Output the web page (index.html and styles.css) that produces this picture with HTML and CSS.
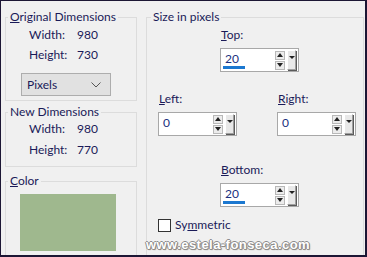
FILE: index.html
```html
<!DOCTYPE html>
<html>

<head>
	<meta charset="utf-8">
	<title>Add Borders</title>
	<link rel="stylesheet" href="styles.css">
</head>

<body>
	<div class="dialog">
		<div class="col-left">
			<fieldset class="group group-orig">
				<legend><u>O</u>riginal Dimensions</legend>
				<div class="dims dims-orig">
					<span>Width:</span><span>980</span>
					<span>Height:</span><span>730</span>
				</div>
				<div class="select">
					<span>Pixels</span>
					<svg width="10" height="6" viewBox="0 0 10 6"><path d="M0.5 0.5 L5 5 L9.5 0.5" fill="none" stroke="#555" stroke-width="1"/></svg>
				</div>
			</fieldset>
			<fieldset class="group group-new">
				<legend>New Dimensions</legend>
				<div class="dims dims-new">
					<span>Width:</span><span>980</span>
					<span>Height:</span><span>770</span>
				</div>
			</fieldset>
			<fieldset class="group group-color">
				<legend><u>C</u>olor</legend>
				<div class="swatch"></div>
			</fieldset>
		</div>

		<fieldset class="group group-size">
			<legend>Size in pixels</legend>
			<div class="row row-top">
				<div class="field">
					<label><u>T</u>op:</label>
					<div class="num">
						<span class="val">20</span>
						<span class="bar"></span>
						<span class="spin"><i class="up"></i><i class="down"></i></span>
						<span class="drop"><i></i></span>
					</div>
				</div>
			</div>
			<div class="row row-mid">
				<div class="field">
					<label><u>L</u>eft:</label>
					<div class="num">
						<span class="val">0</span>
						<span class="spin"><i class="up"></i><i class="down"></i></span>
						<span class="drop"><i></i></span>
					</div>
				</div>
				<div class="field">
					<label><u>R</u>ight:</label>
					<div class="num">
						<span class="val">0</span>
						<span class="spin"><i class="up"></i><i class="down"></i></span>
						<span class="drop"><i></i></span>
					</div>
				</div>
			</div>
			<div class="row row-bottom">
				<div class="field">
					<label><u>B</u>ottom:</label>
					<div class="num">
						<span class="val">20</span>
						<span class="bar"></span>
						<span class="spin"><i class="up"></i><i class="down"></i></span>
						<span class="drop"><i></i></span>
					</div>
				</div>
			</div>
			<div class="check">
				<span class="box"></span>
				<span>Sy<u>m</u>metric</span>
			</div>
		</fieldset>

		<div class="watermark">www.estela-fonseca.com</div>
	</div>
</body>

</html>
```

FILE: styles.css
```css
body {
	margin: 0;
	font-family: Lato, "Noto Sans", sans-serif;
	font-size: 12px;
	line-height: 16px;
	color: #1a1a58;
}

u {
	text-decoration: underline;
	text-underline-offset: 1px;
}

.dialog {
	position: relative;
	box-sizing: border-box;
	width: 367px;
	height: 257px;
	overflow: hidden;
	display: flex;
	align-items: flex-start;
	gap: 9px;
	padding: 8px 0 0 4px;
	background-color: #f0f0f0;
	border-style: solid;
	border-color: #1c1634;
	border-width: 1px 2px 2px 1px;
}

.col-left {
	width: 132px;
	display: flex;
	flex-direction: column;
}

.group {
	margin: 0;
	padding: 0;
	border: 1px solid #dcdcdc;
	min-width: 0;
}

.group legend {
	margin-left: 2px;
	padding: 0 2px;
	line-height: 16px;
}

/* left column groups */
.group-orig {
	padding-bottom: 4px;
}

.dims {
	display: grid;
	grid-template-columns: 48px auto;
	padding-left: 23px;
}

.dims-orig {
	margin-top: 2px;
	row-gap: 4px;
}

.group-new {
	margin-top: 3px;
	padding-bottom: 8px;
}

.dims-new {
	margin-top: 1px;
	row-gap: 5px;
}

.select {
	box-sizing: border-box;
	width: 90px;
	height: 23px;
	margin: 10px 0 0 15px;
	padding: 0 9px 0 5px;
	display: flex;
	align-items: center;
	justify-content: space-between;
	background-color: #e1e1e1;
	border: 1px solid #adadad;
}

.group-color {
	margin-top: 6px;
	height: 100px;
}

.swatch {
	width: 96px;
	height: 57px;
	margin: 5px 0 0 14px;
	background-color: #9fb88e;
}

/* size in pixels */
.group-size {
	width: 216px;
	height: 250px;
}

.group-size legend {
	margin-left: 4px;
}

.row {
	display: flex;
}

.row-top {
	margin-top: 2px;
	padding-left: 73px;
}

.row-mid {
	margin-top: 19px;
	padding-left: 11px;
	gap: 40px;
}

.row-bottom {
	margin-top: 26px;
	padding-left: 73px;
}

.field {
	display: flex;
	flex-direction: column;
	gap: 5px;
}

.field label {
	padding-left: 1px;
}

.num {
	position: relative;
	box-sizing: border-box;
	width: 79px;
	height: 24px;
	display: flex;
	align-items: center;
	padding: 0 2px 0 4px;
	background-color: #fff;
	border: 1px solid #a8a8a8;
	color: #1a2f80;
}

.num .val {
	flex: 1;
	margin-top: -2px;
}

.num .bar {
	position: absolute;
	left: 2px;
	bottom: 2px;
	width: 22px;
	height: 3px;
	background-color: #1c78d0;
}

.spin {
	display: flex;
	flex-direction: column;
	gap: 1px;
	margin-right: 2px;
}

.spin i {
	box-sizing: border-box;
	width: 10px;
	height: 9px;
	display: flex;
	align-items: center;
	justify-content: center;
	background-color: #ececec;
	border: 1px solid #b8b8b8;
}

.spin i::after {
	content: '';
	border-left: 3px solid transparent;
	border-right: 3px solid transparent;
}

.spin .up::after {
	border-bottom: 4px solid #222;
}

.spin .down::after {
	border-top: 4px solid #222;
}

.drop {
	box-sizing: border-box;
	width: 9px;
	height: 20px;
	display: flex;
	justify-content: center;
	padding-top: 5px;
	background-color: #e8e8e8;
	border-style: solid;
	border-width: 1px;
	border-color: #fff #a0a0a0 #a0a0a0 #fff;
	box-shadow: 1px 1px 0 #5a5a5a;
}

.drop i {
	width: 0;
	height: 0;
	border-left: 3px solid transparent;
	border-right: 3px solid transparent;
	border-top: 3px solid #222;
}

.check {
	display: flex;
	align-items: center;
	gap: 4px;
	margin: 10px 0 0 11px;
}

.check .box {
	box-sizing: border-box;
	width: 13px;
	height: 13px;
	background-color: #fff;
	border: 1px solid #333;
}

.watermark {
	position: absolute;
	left: 145px;
	top: 235px;
	font-family: "Liberation Sans", Arial, sans-serif;
	font-weight: bold;
	font-size: 13px;
	letter-spacing: 0.45px;
	line-height: 18px;
	color: #fff;
	text-shadow: 1px 0 0 #8c8c8c, -1px 0 0 #8c8c8c, 0 1px 0 #8c8c8c, 0 -1px 0 #8c8c8c, 1px 1px 1px #777;
}
```
